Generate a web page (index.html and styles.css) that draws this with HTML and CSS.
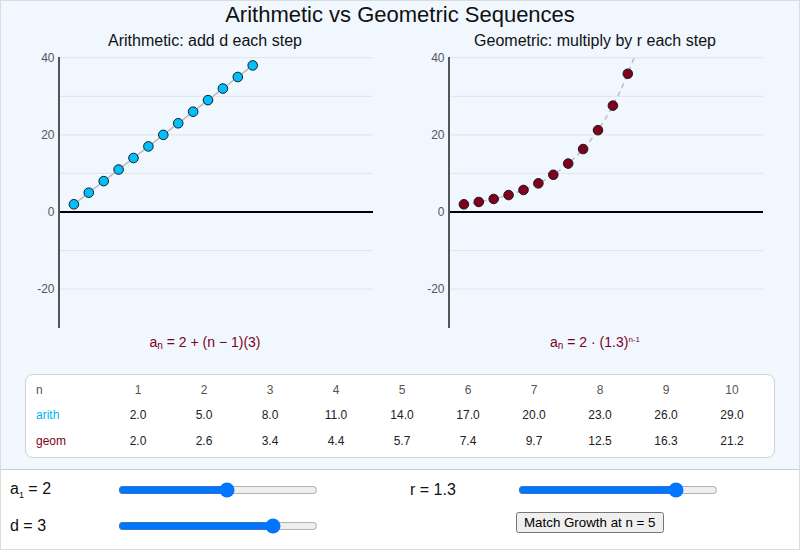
FILE: index.html
```html
<!DOCTYPE html>
<html lang="en">
<head>
<meta charset="utf-8">
<title>Arithmetic vs Geometric Sequences</title>
<link rel="stylesheet" href="styles.css">
</head>
<body>
<div class="app">
  <div class="stage">
    <h1 class="title">Arithmetic vs Geometric Sequences</h1>
    <div class="charts">
      <svg class="chart" width="370" height="326" viewBox="0 0 370 326">
        <text class="subtitle" x="185" y="18">Arithmetic: add d each step</text>
        <g class="grid">
          <line x1="40" y1="29.7" x2="353" y2="29.7"/>
          <line x1="40" y1="68.3" x2="353" y2="68.3"/>
          <line x1="40" y1="106.9" x2="353" y2="106.9"/>
          <line x1="40" y1="145.4" x2="353" y2="145.4"/>
          <line x1="40" y1="222.6" x2="353" y2="222.6"/>
          <line x1="40" y1="261.1" x2="353" y2="261.1"/>
        </g>
        <line class="zero" x1="39" y1="184" x2="353" y2="184"/>
        <line class="yaxis" x1="39" y1="29" x2="39" y2="300"/>
        <g class="ticks">
          <text x="34.5" y="29.7">40</text>
          <text x="34.5" y="106.9">20</text>
          <text x="34.5" y="184">0</text>
          <text x="34.5" y="261.1">-20</text>
        </g>
        <line class="arith-line" x1="53.9" y1="176.29" x2="232.7" y2="37.43"/>
        <g class="arith-pts">
          <circle cx="53.9" cy="176.29" r="4.8"/>
          <circle cx="68.8" cy="164.71" r="4.8"/>
          <circle cx="83.7" cy="153.14" r="4.8"/>
          <circle cx="98.6" cy="141.57" r="4.8"/>
          <circle cx="113.5" cy="130" r="4.8"/>
          <circle cx="128.4" cy="118.43" r="4.8"/>
          <circle cx="143.3" cy="106.86" r="4.8"/>
          <circle cx="158.2" cy="95.29" r="4.8"/>
          <circle cx="173.1" cy="83.71" r="4.8"/>
          <circle cx="188" cy="72.14" r="4.8"/>
          <circle cx="202.9" cy="60.57" r="4.8"/>
          <circle cx="217.8" cy="49" r="4.8"/>
          <circle cx="232.7" cy="37.43" r="4.8"/>
        </g>
        <text class="formula" x="185" y="318.5">a<tspan class="sub" dy="2.5">n</tspan><tspan dy="-2.5"> = 2 + (n − 1)(3)</tspan></text>
      </svg>
      <svg class="chart" width="370" height="326" viewBox="0 0 370 326">
        <text class="subtitle" x="185" y="18">Geometric: multiply by r each step</text>
        <g class="grid">
          <line x1="40" y1="29.7" x2="353" y2="29.7"/>
          <line x1="40" y1="68.3" x2="353" y2="68.3"/>
          <line x1="40" y1="106.9" x2="353" y2="106.9"/>
          <line x1="40" y1="145.4" x2="353" y2="145.4"/>
          <line x1="40" y1="222.6" x2="353" y2="222.6"/>
          <line x1="40" y1="261.1" x2="353" y2="261.1"/>
        </g>
        <line class="zero" x1="39" y1="184" x2="353" y2="184"/>
        <line class="yaxis" x1="39" y1="29" x2="39" y2="300"/>
        <g class="ticks">
          <text x="34.5" y="29.7">40</text>
          <text x="34.5" y="106.9">20</text>
          <text x="34.5" y="184">0</text>
          <text x="34.5" y="261.1">-20</text>
        </g>
        <polyline class="geom-curve" points="53.9,176.29 61.35,175.2 68.8,173.97 76.25,172.57 83.7,170.96 91.15,169.14 98.6,167.05 106.05,164.68 113.5,161.97 120.95,158.88 128.4,155.36 135.85,151.34 143.3,146.77 150.75,141.55 158.2,135.6 165.65,128.81 173.1,121.07 180.55,112.25 188,102.2 195.45,90.73 202.9,77.65 210.35,62.75 217.8,45.75 224.06,29.72"/>
        <g class="geom-pts">
          <circle cx="53.9" cy="176.29" r="4.8"/>
          <circle cx="68.8" cy="173.97" r="4.8"/>
          <circle cx="83.7" cy="170.96" r="4.8"/>
          <circle cx="98.6" cy="167.05" r="4.8"/>
          <circle cx="113.5" cy="161.97" r="4.8"/>
          <circle cx="128.4" cy="155.36" r="4.8"/>
          <circle cx="143.3" cy="146.77" r="4.8"/>
          <circle cx="158.2" cy="135.59" r="4.8"/>
          <circle cx="173.1" cy="121.07" r="4.8"/>
          <circle cx="188" cy="102.19" r="4.8"/>
          <circle cx="202.9" cy="77.66" r="4.8"/>
          <circle cx="217.8" cy="45.76" r="4.8"/>
        </g>
        <text class="formula" x="185" y="318.5">a<tspan class="sub" dy="2.5">n</tspan><tspan dy="-2.5"> = 2 · (1.3)</tspan><tspan class="sup" dy="-5">n-1</tspan></text>
      </svg>
    </div>
    <div class="table-box">
      <table class="seq">
        <colgroup><col class="label-col"><col><col><col><col><col><col><col><col><col><col></colgroup>
        <tr class="head"><td>n</td><td>1</td><td>2</td><td>3</td><td>4</td><td>5</td><td>6</td><td>7</td><td>8</td><td>9</td><td>10</td></tr>
        <tr class="vals"><td class="lab-arith">arith</td><td>2.0</td><td>5.0</td><td>8.0</td><td>11.0</td><td>14.0</td><td>17.0</td><td>20.0</td><td>23.0</td><td>26.0</td><td>29.0</td></tr>
        <tr class="vals"><td class="lab-geom">geom</td><td>2.0</td><td>2.6</td><td>3.4</td><td>4.4</td><td>5.7</td><td>7.4</td><td>9.7</td><td>12.5</td><td>16.3</td><td>21.2</td></tr>
      </table>
    </div>
  </div>
  <div class="controls">
    <div class="ctl"><span class="lbl">a<sub>1</sub> = 2</span><input type="range" min="-20" max="20" step="1" value="2"></div>
    <div class="ctl"><span class="lbl">r = 1.3</span><input type="range" min="0" max="1.6" step="0.1" value="1.3"></div>
    <div class="ctl"><span class="lbl">d = 3</span><input type="range" min="-5" max="5" step="1" value="3"></div>
    <div class="ctl"><span class="lbl"></span><button type="button">Match Growth at n = 5</button></div>
  </div>
</div>
</body>
</html>
```

FILE: styles.css
```css
html, body {
  margin: 0;
  padding: 0;
  background: #ffffff;
}
body {
  font-family: "Liberation Sans", Arial, Helvetica, sans-serif;
  color: #111;
}
.app {
  width: 800px;
  height: 550px;
  box-sizing: border-box;
  border: 1px solid #dcdcdc;
  display: flex;
  flex-direction: column;
}
.stage {
  background: #f0f7ff;
  height: 468px;
  flex: none;
}
.title {
  margin: 0;
  font-size: 22px;
  font-weight: normal;
  line-height: 27px;
  text-align: center;
  color: #111;
}
.charts {
  display: flex;
  gap: 20px;
  padding: 0 19px;
}
.chart {
  display: block;
  overflow: visible;
}
.subtitle {
  font-family: "Liberation Sans", Arial, sans-serif;
  font-size: 16px;
  text-anchor: middle;
  fill: #111;
}
.grid line {
  stroke: #e2e4e6;
  stroke-width: 1;
}
.zero {
  stroke: #000;
  stroke-width: 2;
}
.yaxis {
  stroke: #555;
  stroke-width: 2;
}
.ticks text {
  font-family: "Liberation Sans", Arial, sans-serif;
  font-size: 12px;
  fill: #555;
  text-anchor: end;
  dominant-baseline: central;
}
.arith-line {
  stroke: #bdbdbd;
  stroke-width: 1.5;
}
.arith-pts circle {
  fill: #00bfff;
  stroke: #1a1a1a;
  stroke-width: 1;
}
.geom-curve {
  fill: none;
  stroke: #bdbdbd;
  stroke-width: 1.5;
  stroke-dasharray: 5 4;
}
.geom-pts circle {
  fill: #800020;
  stroke: #1a1a1a;
  stroke-width: 1;
}
.formula {
  font-family: "Liberation Sans", Arial, sans-serif;
  font-size: 14px;
  fill: #800020;
  text-anchor: middle;
}
.formula .sub {
  font-size: 10px;
}
.formula .sup {
  font-size: 8px;
}
.table-box {
  margin: 20px 24px 0 24px;
  height: 84px;
  box-sizing: border-box;
  background: #fff;
  border: 1px solid #cfd3d8;
  border-radius: 8px;
  padding: 2px 9px 0 10px;
}
.seq {
  width: 100%;
  border-collapse: collapse;
  table-layout: fixed;
  font-size: 12px;
}
.seq .label-col {
  width: 69px;
}
.seq td {
  padding: 0;
  height: 25.5px;
  text-align: center;
  color: #222;
}
.seq td:first-child {
  text-align: left;
}
.seq .head td {
  color: #555;
}
.lab-arith {
  color: #00b4f5 !important;
}
.lab-geom {
  color: #800020 !important;
}
.controls {
  flex: 1;
  border-top: 1px solid #cccccc;
  background: #fff;
  display: grid;
  grid-template-columns: 400px 398px;
  grid-auto-rows: 24px;
  row-gap: 12px;
  padding-top: 8px;
}
.ctl {
  display: flex;
  align-items: center;
  padding-left: 9px;
}
.lbl {
  width: 106px;
  font-size: 16px;
  color: #111;
  flex: none;
}
.lbl sub {
  font-size: 9px;
}
.ctl input[type="range"] {
  width: 200px;
  margin: 0 2px;
}
.ctl button {
  font-family: "Liberation Sans", Arial, sans-serif;
  font-size: 13.33px;
  margin-top: -7px;
}
```
